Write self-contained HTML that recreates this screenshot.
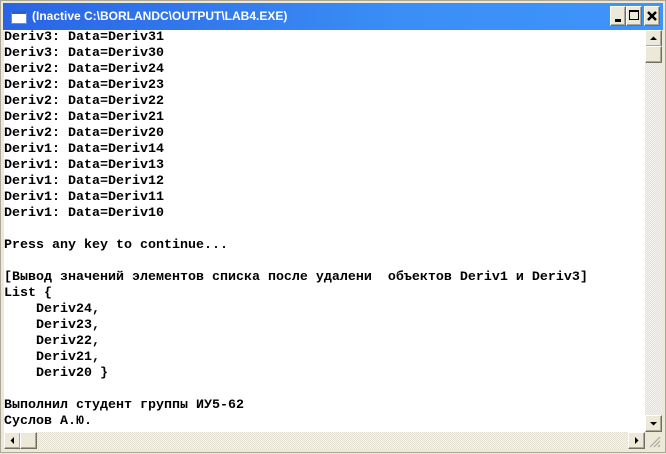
<!DOCTYPE html>
<html><head><meta charset="utf-8"><style>
*{margin:0;padding:0;box-sizing:border-box}
body{width:666px;height:453px;overflow:hidden;background:#ece9d8;position:relative;font-family:"Liberation Sans",sans-serif}
.frame{position:absolute;left:0;top:0;width:666px;height:453px;background:#ece9d8;border:1px solid #aca899}
.title{position:absolute;left:3px;top:3px;width:660px;height:27px;background:linear-gradient(90deg,#2a64e4 0%,#3a8ef6 60%,#3f94fa 100%)}
.title .t{position:absolute;left:29px;top:6px;color:#fff;font-weight:bold;font-size:12px;letter-spacing:0}
.icon{position:absolute;left:8px;top:8px;width:16px;height:13px;background:#fff;border:1px solid #6b8fd6;border-top:3px solid #2f5fbf}
.btn{position:absolute;top:3px;width:16px;height:20px;background:#ece9d8;border:1px solid;border-color:#fff #716f64 #716f64 #fff;box-shadow:inset -1px -1px #aca899}
.client{position:absolute;left:4px;top:30px;width:641px;height:402px;background:#fff;overflow:hidden}
pre{font-family:"Liberation Mono",monospace;font-weight:bold;font-size:13.33px;line-height:16px;color:#000;white-space:pre}
.vs{position:absolute;left:645px;top:30px;width:17px;height:402px;background:repeating-conic-gradient(#f4f3ee 0 25%,#e4e1d2 0 50%) 0 0/2px 2px}
.hs{position:absolute;left:4px;top:432px;width:641px;height:17px;background:repeating-conic-gradient(#f4f3ee 0 25%,#e4e1d2 0 50%) 0 0/2px 2px}
.sb{position:absolute;width:17px;height:17px;background:#ece9d8;border:1px solid;border-color:#fff #716f64 #716f64 #fff;box-shadow:inset -1px -1px #aca899}
.grip{position:absolute;left:645px;top:432px;width:17px;height:17px;background:#ece9d8}
</style></head><body>
<div class="frame"></div>
<div class="title"><div class="icon"></div><div class="t">(Inactive C:\BORLANDC\OUTPUT\LAB4.EXE)</div>
<div class="btn" style="left:607px"><div style="position:absolute;left:4px;top:12px;width:6px;height:3px;background:#000"></div></div>
<div class="btn" style="left:623px"><div style="position:absolute;left:2px;top:3px;width:10px;height:10px;border:1px solid #000;border-top:2px solid #000"></div></div>
<div class="btn" style="left:641px"><svg width="14" height="18" style="position:absolute;left:0;top:0"><path d="M3 5L11 13M11 5L3 13" stroke="#000" stroke-width="2.5"/></svg></div>
</div>
<div class="client"><pre>Deriv3: Data=Deriv31
Deriv3: Data=Deriv30
Deriv2: Data=Deriv24
Deriv2: Data=Deriv23
Deriv2: Data=Deriv22
Deriv2: Data=Deriv21
Deriv2: Data=Deriv20
Deriv1: Data=Deriv14
Deriv1: Data=Deriv13
Deriv1: Data=Deriv12
Deriv1: Data=Deriv11
Deriv1: Data=Deriv10

Press any key to continue...

[Вывод значений элементов списка после удалени  объектов Deriv1 и Deriv3]
List {
    Deriv24,
    Deriv23,
    Deriv22,
    Deriv21,
    Deriv20 }

Выполнил студент группы ИУ5-62
Суслов А.Ю.</pre></div>
<div class="vs">
<div class="sb" style="left:0;top:0"><svg width="15" height="15"><path d="M4 9L11 9L7.5 5.5Z" fill="#000"/></svg></div>
<div class="sb" style="left:0;top:16px"></div>
<div class="sb" style="left:0;top:385px"><svg width="15" height="15"><path d="M4 6L11 6L7.5 9.5Z" fill="#000"/></svg></div>
</div>
<div class="hs">
<div class="sb" style="left:0;top:0"><svg width="15" height="15"><path d="M9 4L9 11L5.5 7.5Z" fill="#000"/></svg></div>
<div class="sb" style="left:16px;top:0"></div>
<div class="sb" style="left:624px;top:0"><svg width="15" height="15"><path d="M6 4L6 11L9.5 7.5Z" fill="#000"/></svg></div>
</div>
<div class="grip"><svg width="17" height="17"><path d="M15 5L5 15M15 9L9 15M15 13L13 15" stroke="#aca899" stroke-width="1.2"/></svg></div>
</body></html>
